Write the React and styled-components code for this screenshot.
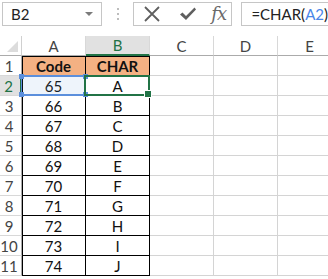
import React from "react";
import styled, { createGlobalStyle } from "styled-components";

const GlobalStyle = createGlobalStyle`
  html, body {
    margin: 0;
    padding: 0;
    background: #ffffff;
    overflow: hidden;
  }
  body {
    font-family: Lato, "Liberation Sans", sans-serif;
  }
`;

const Sheet = styled.div`
  width: 328px;
  height: 279px;
  overflow: hidden;
  background: #fff;
`;

// formula bar
const FormulaBar = styled.div`
  display: flex;
  align-items: center;
  height: 24px;
  padding: 2px 0 0 2px;
  margin-bottom: 10px;
`;

const NameBox = styled.div`
  box-sizing: border-box;
  width: 102px;
  height: 24px;
  border: 1px solid #c6c6c6;
  display: flex;
  align-items: center;
  justify-content: space-between;
  padding: 0 8px 0 8px;
  font-size: 15px;
  color: #222;
`;

const DropArrow = styled.span`
  width: 0;
  height: 0;
  border-left: 4px solid transparent;
  border-right: 4px solid transparent;
  border-top: 4px solid #7b7b7b;
`;

const Dots = styled.div`
  display: flex;
  flex-direction: column;
  gap: 3px;
  margin: 0 14px 0 15px;
  span {
    width: 2px;
    height: 2px;
    background: #bdbdbd;
  }
`;

const ButtonsBox = styled.div`
  box-sizing: border-box;
  width: 101px;
  height: 24px;
  border: 1px solid #c6c6c6;
  display: flex;
  align-items: center;
  padding-left: 9px;
  gap: 18px;
`;

const Fx = styled.span`
  font-family: "DejaVu Serif", "Liberation Serif", serif;
  font-style: italic;
  font-size: 18px;
  line-height: 1;
  color: #6a6a6a;
  letter-spacing: -1px;
  margin-left: -4px;
`;

const FormulaBox = styled.div`
  box-sizing: border-box;
  flex: 1;
  margin-left: 9px;
  height: 24px;
  border: 1px solid #c6c6c6;
  border-right: none;
  display: flex;
  align-items: center;
  padding-left: 9px;
  font-size: 15px;
  color: #222;
`;

const Ref = styled.span`
  color: #4a86e8;
`;

// grid
const Grid = styled.div`
  display: grid;
  grid-template-columns: 22px repeat(5, 64px);
  grid-auto-rows: 20px;
  font-size: 15px;
`;

const Corner = styled.div`
  box-sizing: border-box;
  border-right: 1px solid #d0d0d0;
  border-bottom: 1px solid #ababab;
  position: relative;
  &::after {
    content: "";
    position: absolute;
    right: 3px;
    bottom: 3px;
    width: 0;
    height: 0;
    border-left: 11px solid transparent;
    border-bottom: 11px solid #dcdcdc;
  }
`;

const ColHead = styled.div`
  box-sizing: border-box;
  display: flex;
  align-items: center;
  justify-content: center;
  border-right: 1px solid #d8d8d8;
  border-bottom: ${(p) => (p.active ? "2px solid #217346" : "1px solid #ababab")};
  background: ${(p) => (p.active ? "#e1e1e1" : "#fff")};
  color: ${(p) => (p.active ? "#217346" : "#444")};
`;

const RowHead = styled.div`
  box-sizing: border-box;
  display: flex;
  align-items: center;
  justify-content: center;
  padding-right: 3px;
  border-bottom: 1px solid #d8d8d8;
  border-right: ${(p) => (p.active ? "2px solid #217346" : "1px solid #ababab")};
  background: ${(p) => (p.active ? "#e1e1e1" : "#fff")};
  color: ${(p) => (p.active ? "#217346" : "#444")};
`;

const Cell = styled.div`
  box-sizing: border-box;
  position: relative;
  display: flex;
  align-items: center;
  justify-content: center;
  color: #111;
  font-weight: ${(p) => (p.bold ? 700 : 400)};
  background: ${(p) => p.bg || "#fff"};
  border-right: 1px solid ${(p) => (p.table ? "#000" : "#d4d4d4")};
  border-bottom: 1px solid ${(p) => (p.table ? "#000" : "#d4d4d4")};
  box-shadow: ${(p) =>
    [p.leftEdge && "inset 1px 0 0 #000", p.topEdge && "inset 0 1px 0 #000"]
      .filter(Boolean)
      .join(", ") || "none"};
`;

const RefFrame = styled.div`
  position: absolute;
  left: -1px;
  top: -1px;
  right: -1px;
  bottom: -1px;
  border: 1px solid #5b8fdc;
  border-top-width: 2px;
  border-bottom-width: 2px;
  background: rgba(91, 143, 220, 0.1);
  pointer-events: none;
  z-index: 2;
`;

const Handle = styled.span`
  position: absolute;
  width: 5px;
  height: 5px;
  background: ${(p) => p.color};
  ${(p) => (p.top ? "top: -3px;" : "bottom: -3px;")}
  ${(p) => (p.left ? "left: -3px;" : "right: -3px;")}
`;

const ActiveFrame = styled.div`
  position: absolute;
  left: -2px;
  top: -1px;
  right: -1px;
  bottom: -1px;
  border: 2px solid #217346;
  pointer-events: none;
  z-index: 3;
`;

const FillHandle = styled.span`
  position: absolute;
  right: -4px;
  bottom: -4px;
  width: 6px;
  height: 6px;
  background: #217346;
  border: 1px solid #fff;
`;

const cols = ["A", "B", "C", "D", "E"];
const data = [65, 66, 67, 68, 69, 70, 71, 72, 73, 74];

function CrossIcon() {
  return (
    <svg width="18" height="18" viewBox="0 0 18 18">
      <path d="M2 2 L16 16 M16 2 L2 16" stroke="#5f5f5f" strokeWidth="1.8" fill="none" />
    </svg>
  );
}

function CheckIcon() {
  return (
    <svg width="18" height="16" viewBox="0 0 18 16">
      <path d="M1 8.5 L3.5 6.5 L7 10 L15.5 1.5 L17 3.5 L7 14 Z" fill="#5f5f5f" />
    </svg>
  );
}

export default function App() {
  const rows = [];
  data.forEach((code, i) => {
    const r = i + 2;
    const active = r === 2;
    rows.push(
      <RowHead key={`h${r}`} active={active}>
        {r}
      </RowHead>,
      <Cell key={`a${r}`} table leftEdge>
        {code}
        {active && (
          <RefFrame>
            <Handle color="#5b8fdc" top left />
            <Handle color="#5b8fdc" top />
            <Handle color="#5b8fdc" left />
            <Handle color="#5b8fdc" />
          </RefFrame>
        )}
      </Cell>,
      <Cell key={`b${r}`} table>
        {String.fromCharCode(code)}
        {active && (
          <ActiveFrame>
            <FillHandle />
          </ActiveFrame>
        )}
      </Cell>,
      <Cell key={`c${r}`} />,
      <Cell key={`d${r}`} />,
      <Cell key={`e${r}`} />
    );
  });

  return (
    <Sheet>
      <GlobalStyle />
      <FormulaBar>
        <NameBox>
          B2
          <DropArrow />
        </NameBox>
        <Dots>
          <span />
          <span />
          <span />
        </Dots>
        <ButtonsBox>
          <CrossIcon />
          <CheckIcon />
          <Fx>fx</Fx>
        </ButtonsBox>
        <FormulaBox>
          =CHAR(<Ref>A2</Ref>)
        </FormulaBox>
      </FormulaBar>
      <Grid>
        <Corner />
        {cols.map((c) => (
          <ColHead key={c} active={c === "B"}>
            {c}
          </ColHead>
        ))}
        <RowHead>1</RowHead>
        <Cell table bold bg="#f4b183" leftEdge topEdge>
          Code
        </Cell>
        <Cell table bold bg="#f4b183" topEdge>
          CHAR
        </Cell>
        <Cell />
        <Cell />
        <Cell />
        {rows}
      </Grid>
    </Sheet>
  );
}
